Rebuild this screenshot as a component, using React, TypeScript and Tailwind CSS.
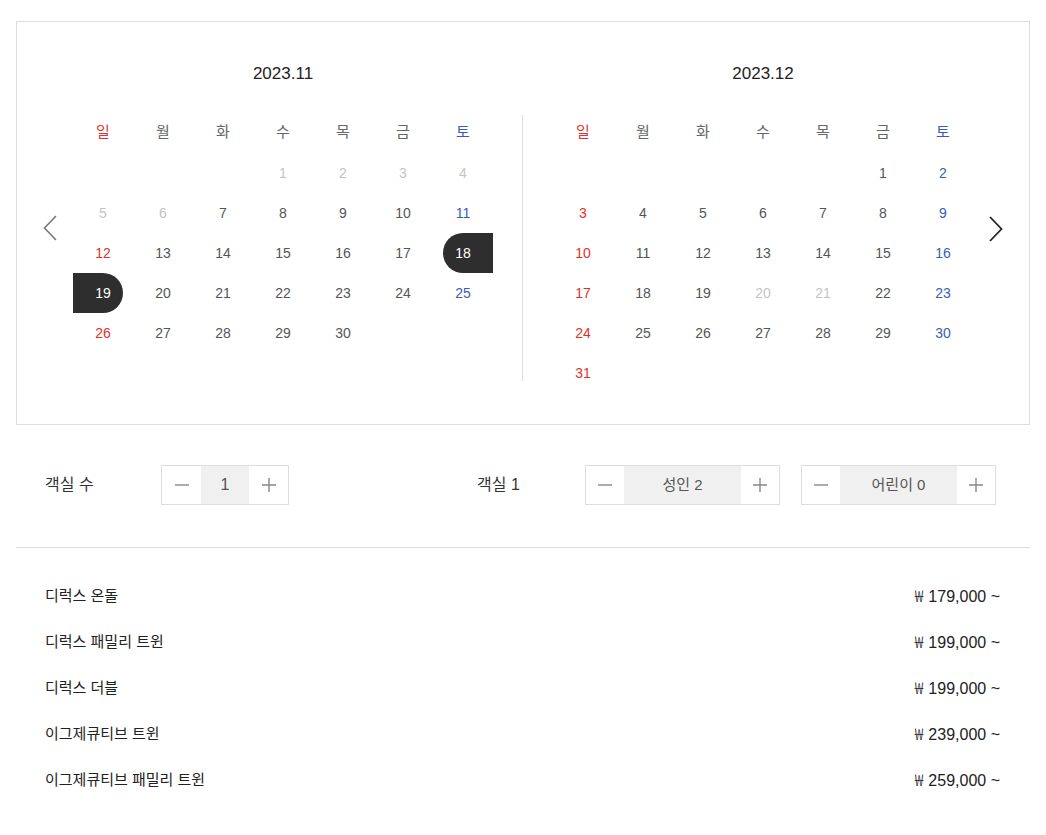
import React from 'react';

type Month = {
  title: string;
  offset: number; // leading blanks
  days: number;
  muted: number[];
  start?: number;
  end?: number;
};

const WEEK = ['일', '월', '화', '수', '목', '금', '토'];

const months: Month[] = [
  { title: '2023.11', offset: 3, days: 30, muted: [1, 2, 3, 4, 5, 6], start: 18, end: 19 },
  { title: '2023.12', offset: 5, days: 31, muted: [20, 21] },
];

const rooms = [
  { name: '디럭스 온돌', price: '179,000' },
  { name: '디럭스 패밀리 트윈', price: '199,000' },
  { name: '디럭스 더블', price: '199,000' },
  { name: '이그제큐티브 트윈', price: '239,000' },
  { name: '이그제큐티브 패밀리 트윈', price: '259,000' },
];

const font = { fontFamily: '"Liberation Sans", "Noto Sans CJK KR", sans-serif' };

function dayColor(col: number, muted: boolean) {
  if (muted) return 'text-[#c4c4c4]';
  if (col === 0) return 'text-[#e0322a]';
  if (col === 6) return 'text-[#3b5bb8]';
  return 'text-[#555]';
}

function MonthGrid({ month }: { month: Month }) {
  const cells: (number | null)[] = [];
  for (let i = 0; i < month.offset; i++) cells.push(null);
  for (let d = 1; d <= month.days; d++) cells.push(d);

  return (
    <div className="w-[420px] shrink-0">
      <div className="h-[24px] flex items-center justify-center text-[17px] text-[#222]">{month.title}</div>
      <div className="grid grid-cols-7 mt-[26px] h-[40px]">
        {WEEK.map((w, i) => (
          <div key={w} className={`flex items-center justify-center text-[15px] ${i === 0 ? 'text-[#e0322a]' : i === 6 ? 'text-[#3b5bb8]' : 'text-[#666]'}`}>
            {w}
          </div>
        ))}
      </div>
      <div className="grid grid-cols-7 mt-[1px]">
        {cells.map((d, i) => {
          const col = i % 7;
          if (d === null) return <div key={`b${i}`} className="h-[40px]" />;
          const isStart = d === month.start;
          const isEnd = d === month.end;
          return (
            <div key={d} className="relative h-[40px] flex items-center justify-center">
              {isStart && <div className="absolute right-0 top-0 h-[40px] w-[50px] rounded-l-full bg-[#2e2e2e]" />}
              {isEnd && <div className="absolute left-0 top-0 h-[40px] w-[50px] rounded-r-full bg-[#2e2e2e]" />}
              <span
                className={`relative text-[14px] ${
                  isStart || isEnd ? 'text-white' : dayColor(col, month.muted.includes(d))
                }`}
              >
                {d}
              </span>
            </div>
          );
        })}
      </div>
    </div>
  );
}

function Stepper({ label, mid, btn }: { label: string; mid: string; btn: string }) {
  return (
    <div className="flex h-[40px] border border-[#ddd] shrink-0">
      <button className={`${btn} flex items-center justify-center text-[#888]`}>
        <svg width="16" height="16" viewBox="0 0 16 16">
          <path d="M1 8h14" stroke="currentColor" strokeWidth="1.4" />
        </svg>
      </button>
      <div className={`${mid} flex items-center justify-center bg-[#f0f0f0] text-[#555]`}>{label}</div>
      <button className={`${btn} flex items-center justify-center text-[#888]`}>
        <svg width="16" height="16" viewBox="0 0 16 16">
          <path d="M1 8h14M8 1v14" stroke="currentColor" strokeWidth="1.4" />
        </svg>
      </button>
    </div>
  );
}

export default function App() {
  return (
    <div className="min-h-screen bg-white pt-[21px] px-[16px]" style={font}>
      <div className="w-[1014px] border border-[#ddd]">
        <div className="flex pt-[40px] pb-[31px]">
          <div className="w-[56px] shrink-0 pl-[26px] pt-[153px] text-[#777]">
            <svg width="14" height="26" viewBox="0 0 14 26">
              <polyline points="13,1 1.5,13 13,25" fill="none" stroke="currentColor" strokeWidth="1.6" />
            </svg>
          </div>
          <MonthGrid month={months[0]} />
          <div className="ml-[29px] mr-[30px] mt-[53px] w-px h-[266px] bg-[#ddd] shrink-0" />
          <MonthGrid month={months[1]} />
          <div className="flex-1 pl-[16px] pt-[154px] text-[#222]">
            <svg width="14" height="26" viewBox="0 0 14 26">
              <polyline points="1,1 12.5,13 1,25" fill="none" stroke="currentColor" strokeWidth="1.8" />
            </svg>
          </div>
        </div>
      </div>

      <div className="w-[1014px] flex items-center h-[123px] pb-[2px] border-b border-[#ddd]">
        <div className="w-[145px] shrink-0 pl-[29px] text-[16px] text-[#333]">객실 수</div>
        <Stepper label="1" mid="w-[48px] text-[16px]" btn="w-[39px]" />
        <div className="w-[188px] shrink-0" />
        <div className="w-[108px] shrink-0 text-[16px] text-[#333]">객실 1</div>
        <Stepper label="성인 2" mid="w-[117px] text-[15px]" btn="w-[38px]" />
        <div className="w-[21px] shrink-0" />
        <Stepper label="어린이 0" mid="w-[117px] text-[15px]" btn="w-[38px]" />
      </div>

      <div className="w-[1014px] pt-[25px] px-[29px]">
        {rooms.map((r) => (
          <div key={r.name} className="h-[46px] flex items-center justify-between text-[15px] text-[#222]">
            <span>{r.name}</span>
            <span className="pr-[1px] text-[16px]">
              <span className="font-['Noto_Sans_CJK_KR'] font-light text-[16px] mr-[5px]">₩</span>
              {r.price} ~
            </span>
          </div>
        ))}
      </div>
    </div>
  );
}
